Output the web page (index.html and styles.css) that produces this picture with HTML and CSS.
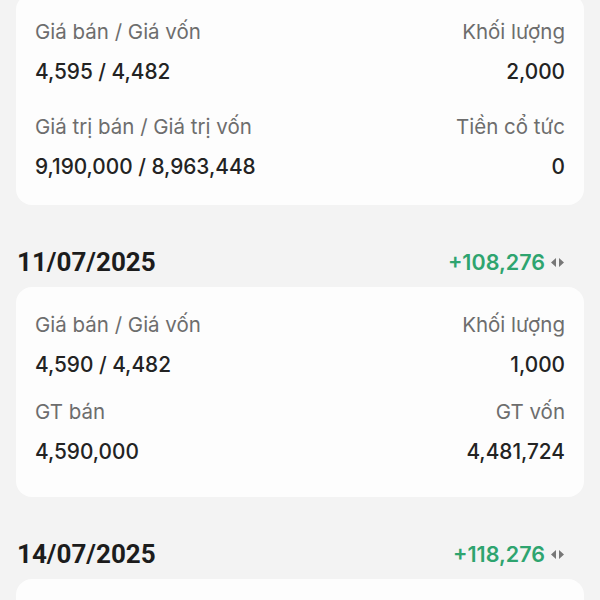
FILE: index.html
```html
<!DOCTYPE html>
<html lang="vi">
<head>
<meta charset="utf-8">
<link rel="stylesheet" href="styles.css">
</head>
<body>
<main class="list">
  <section class="card card-first">
    <div class="row">
      <div class="field">
        <div class="label">Giá bán / Giá vốn</div>
        <div class="value">4,595 / 4,482</div>
      </div>
      <div class="field right">
        <div class="label">Khối lượng</div>
        <div class="value">2,000</div>
      </div>
    </div>
    <div class="row">
      <div class="field">
        <div class="label">Giá trị bán / Giá trị vốn</div>
        <div class="value">9,190,000 / 8,963,448</div>
      </div>
      <div class="field right">
        <div class="label">Tiền cổ tức</div>
        <div class="value">0</div>
      </div>
    </div>
  </section>

  <header class="day">
    <span class="date">11/07/2025</span>
    <span class="profit">+108,276
      <svg class="toggle" width="13" height="9" viewBox="0 0 13 9"><path d="M0 4.5 L5 0 L5 9 Z M13 4.5 L8 0 L8 9 Z" fill="#777"/></svg>
    </span>
  </header>

  <section class="card card-second">
    <div class="row">
      <div class="field">
        <div class="label">Giá bán / Giá vốn</div>
        <div class="value">4,590 / 4,482</div>
      </div>
      <div class="field right">
        <div class="label">Khối lượng</div>
        <div class="value">1,000</div>
      </div>
    </div>
    <div class="row">
      <div class="field">
        <div class="label">GT bán</div>
        <div class="value">4,590,000</div>
      </div>
      <div class="field right">
        <div class="label">GT vốn</div>
        <div class="value">4,481,724</div>
      </div>
    </div>
  </section>

  <header class="day">
    <span class="date">14/07/2025</span>
    <span class="profit">+118,276
      <svg class="toggle" width="13" height="9" viewBox="0 0 13 9"><path d="M0 4.5 L5 0 L5 9 Z M13 4.5 L8 0 L8 9 Z" fill="#777"/></svg>
    </span>
  </header>

  <section class="card card-third"></section>
</main>
</body>
</html>
```

FILE: styles.css
```css
html, body {
  margin: 0;
  padding: 0;
  background: #f3f3f3;
  height: 600px;
  overflow: hidden;
}
body {
  font-family: Inter, Roboto, "Noto Sans", sans-serif;
}
.list {
  padding: 0 16px;
}
.card {
  background: #fdfdfd;
  border-radius: 16px;
  padding: 26px 19px 33px;
  display: flex;
  flex-direction: column;
  gap: 23px;
}
.card-first {
  margin-top: -6px;
  padding-bottom: 26px;
  gap: 31px;
}
.card-third {
  height: 120px;
  padding: 0;
}
.row {
  display: flex;
  justify-content: space-between;
}
.field {
  display: flex;
  flex-direction: column;
  gap: 16px;
}
.field.right {
  align-items: flex-end;
}
.label {
  font-size: 20.5px;
  line-height: 24px;
  color: #6d6d6d;
}
.value {
  font-size: 20.8px;
  line-height: 24px;
  font-weight: 500;
  color: #232323;
}
.day {
  display: flex;
  justify-content: space-between;
  align-items: center;
  height: 32px;
  margin: 41px 20px 9px 1px;
}
.date {
  font-family: Roboto, sans-serif;
  font-size: 26px;
  font-weight: 700;
  color: #1c1c1c;
}
.profit {
  display: flex;
  align-items: center;
  gap: 6px;
  font-size: 21.5px;
  font-weight: 600;
  color: #2ea46f;
}
.toggle {
  display: block;
}
```
